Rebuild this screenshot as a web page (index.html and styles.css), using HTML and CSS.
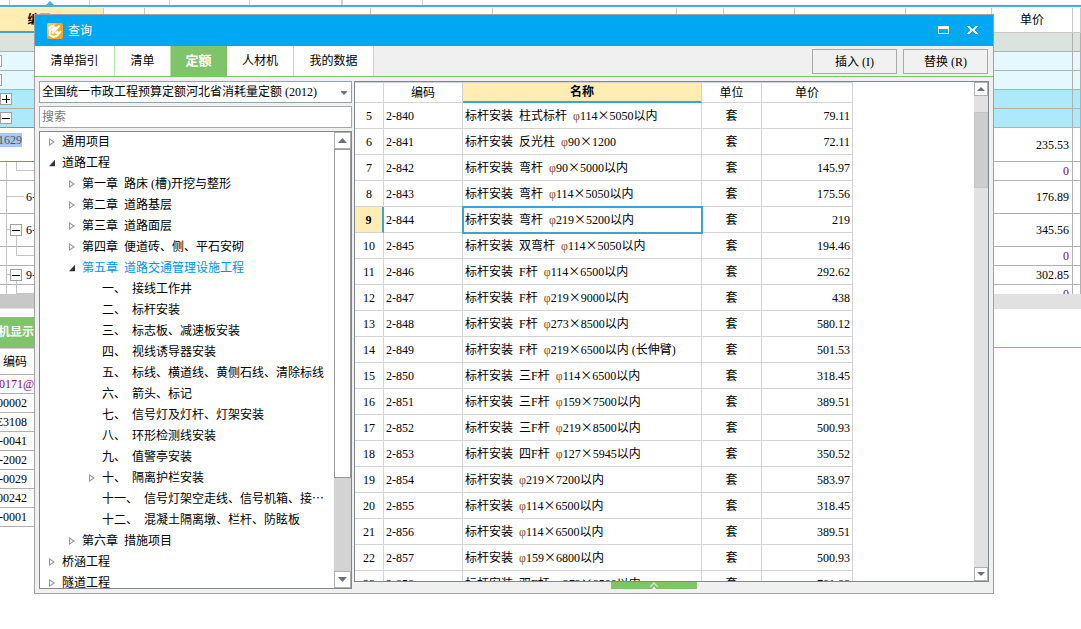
FILE: index.html
```html
<!DOCTYPE html>
<html lang="zh-CN">
<head>
<meta charset="utf-8">
<title>查询</title>
<link rel="stylesheet" href="styles.css">
</head>
<body>
<main class="app">
  <div class="strip"><i class="s1"></i><i class="s2"></i><i class="s3"></i><i class="s3"></i><i class="s4"></i><i class="s5"></i><i class="s3"></i>
    <svg class="marker" width="8" height="4" viewBox="0 0 8 4"><path d="M0 4 4 0l4 4z" fill="#3fb0e0"/></svg>
  </div>
  <div class="sheet">
    <table class="bills">
      <colgroup><col class="w104"><col class="w41"><col class="w226"><col class="w122"><col class="w184"><col class="w47"><col class="w71"><col class="w111"><col><col class="w81"><col class="w8"></colgroup>
      <thead><tr><th class="on">编码</th><th></th><th></th><th></th><th></th><th></th><th></th><th></th><th></th><th>单价</th><th></th></tr></thead>
      <tbody>
        <tr class="total"><td></td><td colspan="8"></td><td></td><td></td></tr>
        <tr class="pale"><td></td><td colspan="8"></td><td></td><td></td></tr>
        <tr class="pale"><td></td><td colspan="8"></td><td></td><td></td></tr>
        <tr class="cyan"><td></td><td colspan="8"></td><td></td><td></td></tr>
        <tr class="cyan edge"><td></td><td colspan="8"></td><td></td><td></td></tr>
        <tr class="tall edge"><td class="mark"><mark>1629</mark></td><td colspan="8"></td><td>235.53</td><td></td></tr>
        <tr><td></td><td colspan="8"></td><td class="violet">0</td><td></td></tr>
        <tr class="mid"><td>6-</td><td colspan="8"></td><td>176.89</td><td></td></tr>
        <tr class="mid"><td>6-</td><td colspan="8"></td><td>345.56</td><td></td></tr>
        <tr><td></td><td colspan="8"></td><td class="violet">0</td><td></td></tr>
        <tr><td>9-</td><td colspan="8"></td><td>302.85</td><td></td></tr>
        <tr><td></td><td colspan="8"></td><td class="violet">0</td><td></td></tr>
      </tbody>
    </table>
    <svg class="branches" width="34" height="286" viewBox="0 0 34 286" fill="none" shape-rendering="crispEdges">
      <g stroke="#c4c4c4"><path d="M6.500 116v4M6.500 154v132M6.500 188.500H24M6.500 221.500h4M6.500 266.500h4M16.500 154v8.500H34M16.500 228v19.500H34M16.500 273v12.500H34"/></g>
      <g stroke="#a0a0a0" fill="#fff"><path d="M-8.500 47.500h10v11h-10zM-8.500 66.500h10v11h-10zM.5 85.500h11v11H.5zM.5 104.500h11v11H.5zM10.500 216.500h11v11h-11zM10.500 261.500h11v11h-11z"/></g>
      <path d="M2 91.500h8M6.500 87v8M2 110.500h8M12 222.500h8M12 267.500h8" stroke="#000"/>
    </svg>
  </div>
  <div class="hscroll"><i></i></div>
  <div class="lower"><button class="lowertab" type="button">机显示</button></div>
  <div class="codes">
    <b>编码</b><span class="violet full">W0171@</span><span>00002</span><span>E3108</span><span>-0041</span><span>-2002</span><span>-0029</span><span>00242</span><span>-0001</span>
  </div>
</main>

<section class="dialog" aria-label="查询">
  <header class="title">
    <svg width="16" height="16" viewBox="0 0 16 16"><rect width="16" height="16" rx="2" fill="#f7a51c"/><path d="M0 11V2q0-2 2-2h8L5 6z" fill="#fcc64c"/><path d="M7 2.500 2.500 4.500 3 8l-.5 4 4 2 4-1.500L14 8" fill="none" stroke="#fff" stroke-width="2" stroke-linejoin="round"/><path d="M5 10.500 12.500 2.500M4 7.500 8.500 4M8.500 10.500l3-2" fill="none" stroke="#fff" stroke-width="2.500"/></svg>
    <h1>查询</h1>
    <button type="button" aria-label="最大化"><svg width="12" height="9" viewBox="0 0 12 9"><path d="M0 0h11v8H0zM1 3v4h9V3z" fill="#fff" fill-rule="evenodd"/></svg></button>
    <button type="button" aria-label="关闭"><svg width="12" height="9" viewBox="0 0 12 9" shape-rendering="crispEdges"><path d="M0 0h3v1h1v1h1v1h1V2h1V1h1V0h3v1h-1v1H9v1H8v2h1v1h1v1h1v1H8V7H7V6H6V5H5v1H4v1H3v1H0V7h1V6h1V5h1V3H2V2H1V1H0z" fill="#fff"/></svg></button>
  </header>
  <nav class="tabs">
    <button class="t4" type="button">清单指引</button><button class="t2" type="button">清单</button><button class="t2 active" type="button">定额</button><button class="t3" type="button">人材机</button><button class="t4" type="button">我的数据</button>
    <div class="actions"><button type="button">插入<span>(I)</span></button><button type="button">替换<span>(R)</span></button></div>
  </nav>
  <div class="body">
    <aside class="side">
      <div class="pick">
        <select aria-label="定额库"><option>全国统一市政工程预算定额河北省消耗量定额 (2012)</option></select>
        <svg width="6" height="4" viewBox="0 0 6 4"><path d="M0 0h6v1L3 4 0 1z" fill="#6d7480"/></svg>
      </div>
      <input class="search" type="text" placeholder="搜索" aria-label="搜索">
      <div class="treebox">
        <ul class="tree">
          <li class="shut">通用项目</li>
          <li class="open">道路工程</li>
          <li class="l1 shut"><span>第一章</span> 路床 (槽)开挖与整形</li>
          <li class="l1 shut"><span>第二章</span> 道路基层</li>
          <li class="l1 shut"><span>第三章</span> 道路面层</li>
          <li class="l1 shut"><span>第四章</span> 便道砖、侧、平石安砌</li>
          <li class="l1 open current"><span>第五章</span> 道路交通管理设施工程</li>
          <li class="l2"><span>一、</span> 接线工作井</li>
          <li class="l2"><span>二、</span> 标杆安装</li>
          <li class="l2"><span>三、</span> 标志板、减速板安装</li>
          <li class="l2"><span>四、</span> 视线诱导器安装</li>
          <li class="l2"><span>五、</span> 标线、横道线、黄侧石线、清除标线</li>
          <li class="l2"><span>六、</span> 箭头、标记</li>
          <li class="l2"><span>七、</span> 信号灯及灯杆、灯架安装</li>
          <li class="l2"><span>八、</span> 环形检测线安装</li>
          <li class="l2"><span>九、</span> 值警亭安装</li>
          <li class="l2 shut"><span>十、</span> 隔离护栏安装</li>
          <li class="l2"><span>十一、</span> 信号灯架空走线、信号机箱、接<em>…</em></li>
          <li class="l2"><span>十二、</span> 混凝土隔离墩、栏杆、防眩板</li>
          <li class="l1 shut"><span>第六章</span> 措施项目</li>
          <li class="shut">桥涵工程</li>
          <li class="shut">隧道工程</li>
        </ul>
        <div class="bar treebar">
          <button type="button" aria-label="向上"><svg width="9" height="5" viewBox="0 0 9 5"><path d="M0 5 4.500 0 9 5z" fill="#6a6f80"/></svg></button>
          <div class="track"><i class="thumb"></i></div>
          <button type="button" aria-label="向下"><svg width="9" height="5" viewBox="0 0 9 5"><path d="M0 0 4.500 5 9 0z" fill="#6a6f80"/></svg></button>
        </div>
      </div>
    </aside>
    <div class="main">
      <div class="gridbox">
        <div class="scroller">
        <table class="quota">
          <colgroup><col class="w29"><col class="w79"><col class="w239"><col class="w60"><col class="w91"></colgroup>
          <thead><tr><th></th><th>编码</th><th class="on">名称</th><th>单位</th><th>单价</th></tr></thead>
          <tbody>
            <tr><td>5</td><td>2-840</td><td><span>标杆安装</span> <span>柱式标杆</span> <i>φ</i>114<b>×</b>5050以内</td><td>套</td><td>79.11</td></tr>
            <tr><td>6</td><td>2-841</td><td><span>标杆安装</span> <span>反光柱</span> <i>φ</i>90<b>×</b>1200</td><td>套</td><td>72.11</td></tr>
            <tr><td>7</td><td>2-842</td><td><span>标杆安装</span> <span>弯杆</span> <i>φ</i>90<b>×</b>5000以内</td><td>套</td><td>145.97</td></tr>
            <tr><td>8</td><td>2-843</td><td><span>标杆安装</span> <span>弯杆</span> <i>φ</i>114<b>×</b>5050以内</td><td>套</td><td>175.56</td></tr>
            <tr class="chosen"><td>9</td><td>2-844</td><td><span>标杆安装</span> <span>弯杆</span> <i>φ</i>219<b>×</b>5200以内</td><td>套</td><td>219</td></tr>
            <tr><td>10</td><td>2-845</td><td><span>标杆安装</span> <span>双弯杆</span> <i>φ</i>114<b>×</b>5050以内</td><td>套</td><td>194.46</td></tr>
            <tr><td>11</td><td>2-846</td><td><span>标杆安装</span> <span>F杆</span> <i>φ</i>114<b>×</b>6500以内</td><td>套</td><td>292.62</td></tr>
            <tr><td>12</td><td>2-847</td><td><span>标杆安装</span> <span>F杆</span> <i>φ</i>219<b>×</b>9000以内</td><td>套</td><td>438</td></tr>
            <tr><td>13</td><td>2-848</td><td><span>标杆安装</span> <span>F杆</span> <i>φ</i>273<b>×</b>8500以内</td><td>套</td><td>580.12</td></tr>
            <tr><td>14</td><td>2-849</td><td><span>标杆安装</span> <span>F杆</span> <i>φ</i>219<b>×</b>6500以内 (长伸臂)</td><td>套</td><td>501.53</td></tr>
            <tr><td>15</td><td>2-850</td><td><span>标杆安装</span> <span>三F杆</span> <i>φ</i>114<b>×</b>6500以内</td><td>套</td><td>318.45</td></tr>
            <tr><td>16</td><td>2-851</td><td><span>标杆安装</span> <span>三F杆</span> <i>φ</i>159<b>×</b>7500以内</td><td>套</td><td>389.51</td></tr>
            <tr><td>17</td><td>2-852</td><td><span>标杆安装</span> <span>三F杆</span> <i>φ</i>219<b>×</b>8500以内</td><td>套</td><td>500.93</td></tr>
            <tr><td>18</td><td>2-853</td><td><span>标杆安装</span> <span>四F杆</span> <i>φ</i>127<b>×</b>5945以内</td><td>套</td><td>350.52</td></tr>
            <tr><td>19</td><td>2-854</td><td><span>标杆安装</span> <i>φ</i>219<b>×</b>7200以内</td><td>套</td><td>583.97</td></tr>
            <tr><td>20</td><td>2-855</td><td><span>标杆安装</span> <i>φ</i>114<b>×</b>6500以内</td><td>套</td><td>318.45</td></tr>
            <tr><td>21</td><td>2-856</td><td><span>标杆安装</span> <i>φ</i>114<b>×</b>6500以内</td><td>套</td><td>389.51</td></tr>
            <tr><td>22</td><td>2-857</td><td><span>标杆安装</span> <i>φ</i>159<b>×</b>6800以内</td><td>套</td><td>500.93</td></tr>
            <tr><td>23</td><td>2-858</td><td><span>标杆安装</span> <span>双F杆</span> <i>φ</i>273<b>×</b>8500以内</td><td>套</td><td>701.88</td></tr>
          </tbody>
        </table>
        </div>
        <div class="bar gridbar">
          <button type="button" aria-label="向上"><svg width="8" height="4" viewBox="0 0 8 4"><path d="M0 4 4 0l4 4z" fill="#6d6d78"/></svg></button>
          <div class="track"><i class="thumb"></i></div>
          <button type="button" aria-label="向下"><svg width="8" height="4" viewBox="0 0 8 4"><path d="M0 0 4 4l4-4z" fill="#6d6d78"/></svg></button>
        </div>
      </div>
      <button class="handle" type="button" aria-label="展开"><svg width="10" height="7" viewBox="0 0 10 7"><path d="M1 5 5 1l4 4" fill="none" stroke="#c4eab8" stroke-width="1.500"/><path d="M3 7 5 4.500 7 7z" fill="#fff"/></svg></button>
    </div>
  </div>
</section>
</body>
</html>
```

FILE: styles.css
```css
* { box-sizing: border-box; }
body, h1, ul { margin: 0; padding: 0; }
body, button, input, select {
  font: 12px/18px "Liberation Serif", "Noto Sans CJK SC", serif;
  color: #000;
}
body { position: relative; min-height: 100vh; overflow: hidden; background: #fff; }
button { padding: 0; border: 0; background: none; }
svg { display: block; flex: none; }
table { border-collapse: separate; border-spacing: 0; table-layout: fixed; }
th, td { padding: 0; overflow: hidden; white-space: nowrap; font-weight: normal; }
.violet { color: #800080; }

/* background application */
.strip { position: relative; display: flex; height: 7px; border-bottom: 2px solid #3fb0e0; }
.strip i { border-right: 1px solid #d0d0d0; }
.strip .s1 { width: 10px; }
.strip .s2, .strip .s3 { width: 80px; }
.strip .s4 { width: 92px; }
.strip .s5 { width: 1px; }
.marker { position: absolute; left: 46px; top: 1px; }
.sheet { position: relative; height: 287px; overflow: hidden; padding-top: 1px; }
.bills { width: 100%; }
.w104 { width: 104px; } .w41 { width: 41px; } .w226 { width: 226px; } .w122 { width: 122px; }
.w184 { width: 184px; } .w47 { width: 47px; } .w71 { width: 71px; } .w111 { width: 111px; }
.w81 { width: 81px; } .w8 { width: 8px; }
.bills th { height: 25px; border-right: 1px solid #c8c8c8; border-bottom: 1px solid #c8c8c8; }
.bills th.on { padding-right: 24px; background: #ffedb3; font-weight: bold; border-bottom: 2px solid #3ba4d4; }
.bills td { height: 19px; line-height: 16px; border-right: 1px solid #b0b0b0; border-bottom: 1px solid #b0b0b0; text-align: right; padding-right: 3px; }
.bills td:first-child { text-align: left; padding-left: 26px; }
.bills .mid td { height: 33px; }
.bills .tall td { height: 34px; }
.bills td.mark:first-child { padding-left: 0; vertical-align: top; padding-top: 4px; }
.bills mark { display: inline-flex; justify-content: flex-end; background: #a6c8f5; color: #555; line-height: 14px; width: 22px; }
.total td { background: #dae3de; }
.pale td { background: #e5f8fd; }
.cyan td { background: #ade9fb; }
.bills .edge td:first-child { border-bottom-color: #3ba4d4; }
.branches { position: absolute; left: 0; top: 1px; }
.hscroll { height: 15px; background: #e1e1e1; }
.hscroll i { display: block; width: 50%; height: 14px; background: #c8c8c8; }
.lower { display: flex; margin-top: 8px; border-bottom: 1px solid #7fc36a; }
.lowertab { display: flex; justify-content: flex-end; align-items: center; width: 34px; height: 30px; overflow: hidden; background: #7fc36a; color: #fff; font-weight: bold; white-space: nowrap; }
.codes { display: flex; flex-direction: column; width: 34px; }
.codes b, .codes span { display: flex; justify-content: flex-end; height: 19px; padding-right: 7px; overflow: hidden; white-space: nowrap; border-bottom: 1px solid #b0b0b0; }
.codes b { height: 27px; align-items: center; border-top: 1px solid #d0d0d0; font-weight: normal; }
.codes .full { padding-right: 0; }

/* dialog window */
.dialog { position: absolute; left: 34px; right: 87px; top: 14px; height: 580px; display: flex; flex-direction: column; border: 1px solid #a0a0a0; background: #f0f0f0; }
.title { display: flex; align-items: center; height: 31px; padding: 0 14px 0 12px; background: #00a8f3; color: #fff; }
.title h1 { flex: 1; margin-left: 5px; font-size: 12px; font-weight: normal; }
.title button { margin-left: 17px; }
.tabs { display: flex; height: 31px; border-bottom: 1px solid #7fc36a; }
.tabs > button { border-right: 1px solid #b5e6a4; background: #fff; }
.tabs .t4 { width: 80px; }
.tabs .t3 { width: 67px; }
.tabs .t2 { width: 56px; }
.tabs .active { border-color: #7fc36a; background: #7fc36a; color: #fff; font-weight: bold; font-size: 13px; }
.actions { display: flex; gap: 6px; margin-left: auto; padding: 3px 5px; }
.actions button { width: 85px; height: 25px; border: 1px solid #a8a8a8; background: #f1f1f1; }
.actions span { margin-left: 3px; }
.body { flex: 1; display: flex; gap: 2px; min-height: 0; padding: 4px; }
.side { display: flex; flex-direction: column; gap: 3px; width: 313px; }
.pick { position: relative; }
.pick select { display: block; width: 100%; height: 22px; padding: 0 16px 0 2px; appearance: none; border: 1px solid #8fa5b0; border-radius: 0; background: #fff; }
.pick svg { position: absolute; right: 5px; top: 10px; pointer-events: none; }
.search { width: 100%; height: 22px; padding: 0 2px; border: 1px solid #a8a8a8; background: #fff; }
.search::placeholder { color: #777; opacity: 1; }
.treebox { flex: 1; display: flex; min-height: 0; border: 1px solid #82878f; background: #fff; }
.tree { flex: 1; min-width: 0; overflow: hidden; list-style: none; white-space: nowrap; }
.tree li { height: 21px; padding-left: 22px; line-height: 21px; display: flow-root; }
.tree .l1 { padding-left: 42px; }
.tree .l2 { padding-left: 62px; }
.tree span { margin-right: 3px; }
.tree em { font-family: "Noto Sans CJK SC", sans-serif; font-style: normal; line-height: 1; }
.tree .current { color: #0090ff; }
.tree .shut::before, .tree .open::before { content: ""; float: left; width: 6px; height: 8px; margin: 6px 0 0 -13px; }
.tree .shut::before { background: #999; clip-path: polygon(0 0, 100% 50%, 0 100%, 0 0, 1px 2px, 1px 6px, 4px 4px, 1px 2px); }
.tree .open::before { background: #333; clip-path: polygon(100% 10%, 100% 90%, 0 90%); }
.bar { display: flex; flex-direction: column; }
.bar button { display: flex; align-items: center; justify-content: center; border: 1px solid #b0b0b0; background: #fff; }
.track { flex: 1; min-height: 0; }
.thumb { display: block; }
.treebar { width: 17px; background: #d3d3d3; }
.treebar button { height: 17px; }
.treebar .thumb { height: 78%; border: 1px solid #999; background: #fff; }
.main { flex: 1; display: flex; flex-direction: column; min-width: 0; }
.gridbox { flex: 1; display: flex; min-height: 0; border: 1px solid #82878f; background: #fff; }
.scroller { flex: 1; min-width: 0; overflow: hidden; }
.quota { width: 498px; }
.w29 { width: 29px; } .w79 { width: 79px; } .w239 { width: 239px; } .w60 { width: 60px; } .w91 { width: 91px; }
.quota th { height: 21px; line-height: 16px; border-top: 1px solid #d3d3d3; }
.quota th, .quota td { border-right: 1px solid #d3d3d3; border-bottom: 1px solid #d3d3d3; }
.quota th.on { background: #ffedb3; border-bottom: 2px solid #3ba4d4; font-weight: bold; }
.quota td { height: 26px; padding: 0 2px; text-align: left; }
.quota td:nth-child(1), .quota td:nth-child(4) { text-align: center; }
.quota td:nth-child(5) { text-align: right; padding-right: 2px; }
.quota span { margin-right: 3px; }
.quota i { font-style: normal; color: #8a4a10; }
.quota td b { display: inline-block; width: 12px; text-align: center; font-family: "Noto Sans CJK SC", sans-serif; font-weight: normal; line-height: 16px; }
.quota .chosen td:first-child { background: #ffedb3; border-right: 2px solid #3ba4d4; font-weight: bold; }
.quota .chosen td:nth-child(3) { outline: 2px solid #3ba4d4; outline-offset: -1px; }
.gridbar { width: 14px; background: #e1e1e1; }
.gridbar button { height: 14px; }
.gridbar .thumb { height: 76px; margin-top: 16px; background: #cdcdcd; border: 1px solid #c4c4c4; }
.handle { display: flex; justify-content: center; width: 86px; height: 7px; margin-left: 257px; background: #7fc36a; }
```
